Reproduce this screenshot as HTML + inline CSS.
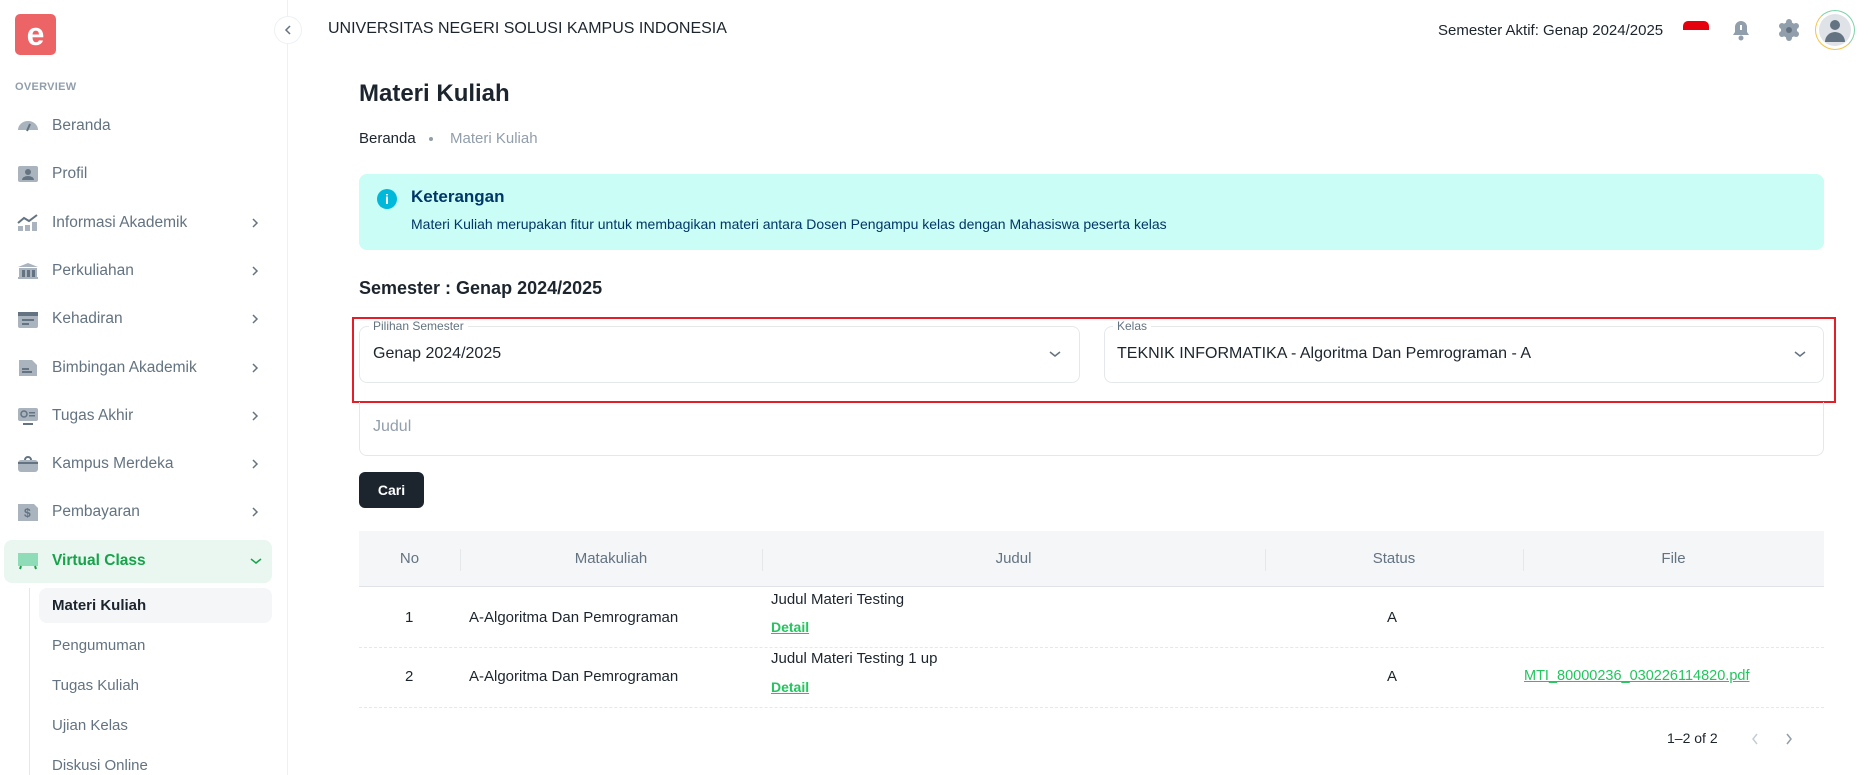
<!DOCTYPE html>
<html><head><meta charset="utf-8"><style>
*{box-sizing:border-box;margin:0;padding:0}
body{width:1870px;height:775px;overflow:hidden;background:#fff;font-family:"Liberation Sans",sans-serif;color:#1c252e;position:relative}
.abs{position:absolute}
.side{position:absolute;left:0;top:0;width:288px;height:775px;border-right:1px solid #eef0f2}
.mi{position:absolute;left:0;width:288px;height:40px;display:flex;align-items:center;font-size:15.5px;color:#637381}
.mi .ic{position:absolute;left:17px;width:22px;height:18px}
.mi .t{position:absolute;left:52px}
.mi .ch{position:absolute;left:250px;top:15px}
.sub{position:absolute;left:52px;font-size:15px;color:#637381}
.th{position:absolute;top:533px;height:55px;line-height:55px;font-size:15px;color:#637381;text-align:center}
.sep{position:absolute;top:549px;width:1px;height:22px;background:#e5e8eb}
.td{position:absolute;font-size:15px;color:#1c252e}
.dl{position:absolute;font-size:14px;font-weight:bold;color:#22c55e;text-decoration:underline}
</style></head><body>
<div class="side">
  <div class="abs" style="left:15px;top:14px;width:41px;height:41px;background:#ec6466;border-radius:5px;color:#fff;font-weight:bold;font-size:32px;line-height:40px;text-align:center">e</div>
  <div class="abs" style="left:15px;top:81px;font-size:11px;font-weight:bold;color:#919eab;letter-spacing:.3px">OVERVIEW</div>
  <div class="mi" style="top:106px"><svg class="ic" viewBox="0 0 22 18"><path d="M1 13a10 9 0 0 1 20 0z" fill="#aab4be"/><path d="M10 14l3-7" stroke="#637381" stroke-width="2"/></svg><span class="t">Beranda</span></div>
  <div class="mi" style="top:154px"><svg class="ic" viewBox="0 0 22 18"><rect x="1" y="1" width="20" height="16" rx="2" fill="#aab4be"/><circle cx="11" cy="7" r="3" fill="#637381"/><path d="M5 15a6 4 0 0 1 12 0z" fill="#637381"/></svg><span class="t">Profil</span></div>
  <div class="mi" style="top:203px"><svg class="ic" viewBox="0 0 22 18"><path d="M1 9l6-5 5 3 8-6" stroke="#637381" stroke-width="2" fill="none"/><rect x="1" y="12" width="5" height="5" fill="#aab4be"/><rect x="8" y="11" width="5" height="6" fill="#aab4be"/><rect x="15" y="8" width="5" height="9" fill="#aab4be"/></svg><span class="t">Informasi Akademik</span><svg class="ch" width="10" height="10" viewBox="0 0 10 10"><path d="M3 1l4 4-4 4" stroke="#637381" stroke-width="1.5" fill="none"/></svg></div>
  <div class="mi" style="top:251px"><svg class="ic" viewBox="0 0 22 18"><path d="M1 5l10-4 10 4z" fill="#aab4be"/><rect x="2" y="6" width="18" height="9" fill="#aab4be"/><rect x="5" y="8" width="3" height="7" fill="#637381"/><rect x="10" y="8" width="3" height="7" fill="#637381"/><rect x="15" y="8" width="3" height="7" fill="#637381"/><rect x="1" y="15" width="20" height="2" fill="#aab4be"/></svg><span class="t">Perkuliahan</span><svg class="ch" width="10" height="10" viewBox="0 0 10 10"><path d="M3 1l4 4-4 4" stroke="#637381" stroke-width="1.5" fill="none"/></svg></div>
  <div class="mi" style="top:299px"><svg class="ic" viewBox="0 0 22 18"><rect x="1" y="2" width="20" height="16" rx="2" fill="#aab4be"/><rect x="1" y="2" width="20" height="4" fill="#637381"/><rect x="5" y="9" width="12" height="2" fill="#637381"/><rect x="5" y="13" width="7" height="2" fill="#637381"/></svg><span class="t">Kehadiran</span><svg class="ch" width="10" height="10" viewBox="0 0 10 10"><path d="M3 1l4 4-4 4" stroke="#637381" stroke-width="1.5" fill="none"/></svg></div>
  <div class="mi" style="top:348px"><svg class="ic" viewBox="0 0 22 18"><path d="M2 1h13l5 5v11H2z" fill="#aab4be"/><rect x="5" y="9" width="7" height="2" fill="#637381"/><rect x="5" y="12" width="10" height="2" fill="#637381"/></svg><span class="t">Bimbingan Akademik</span><svg class="ch" width="10" height="10" viewBox="0 0 10 10"><path d="M3 1l4 4-4 4" stroke="#637381" stroke-width="1.5" fill="none"/></svg></div>
  <div class="mi" style="top:396px"><svg class="ic" viewBox="0 0 22 18"><rect x="1" y="1" width="20" height="13" rx="2" fill="#aab4be"/><circle cx="7" cy="7" r="3" fill="none" stroke="#637381" stroke-width="1.5"/><rect x="12" y="5" width="6" height="1.5" fill="#637381"/><rect x="12" y="8" width="6" height="1.5" fill="#637381"/><rect x="6" y="16" width="10" height="2" fill="#637381"/></svg><span class="t">Tugas Akhir</span><svg class="ch" width="10" height="10" viewBox="0 0 10 10"><path d="M3 1l4 4-4 4" stroke="#637381" stroke-width="1.5" fill="none"/></svg></div>
  <div class="mi" style="top:444px"><svg class="ic" viewBox="0 0 22 18"><rect x="1" y="5" width="20" height="12" rx="3" fill="#aab4be"/><path d="M1 8h20" stroke="#637381" stroke-width="2"/><path d="M8 5a3 3 0 0 1 6 0" stroke="#637381" stroke-width="2" fill="none"/></svg><span class="t">Kampus Merdeka</span><svg class="ch" width="10" height="10" viewBox="0 0 10 10"><path d="M3 1l4 4-4 4" stroke="#637381" stroke-width="1.5" fill="none"/></svg></div>
  <div class="mi" style="top:492px"><svg class="ic" viewBox="0 0 22 18"><path d="M1 1h16l4 4v13H1z" fill="#aab4be"/><text x="7" y="14" font-size="12" font-weight="bold" fill="#637381" font-family="Liberation Sans">$</text></svg><span class="t">Pembayaran</span><svg class="ch" width="10" height="10" viewBox="0 0 10 10"><path d="M3 1l4 4-4 4" stroke="#637381" stroke-width="1.5" fill="none"/></svg></div>
  <div class="abs" style="left:4px;top:540px;width:268px;height:43px;background:#eaf6f0;border-radius:8px"></div>
  <div class="mi" style="top:541px;color:#16a34a;font-weight:bold"><svg class="ic" viewBox="0 0 22 18"><rect x="1" y="1" width="20" height="13" fill="#8fdcb8"/><path d="M4 14l-1 3M18 14l1 3" stroke="#16a34a" stroke-width="2"/></svg><span class="t">Virtual Class</span><svg class="ch" width="12" height="10" viewBox="0 0 12 10"><path d="M1 3l5 4 5-4" stroke="#16a34a" stroke-width="1.5" fill="none"/></svg></div>
  <div class="abs" style="left:29px;top:588px;width:1px;height:187px;background:#e5e8eb"></div>
  <div class="abs" style="left:39px;top:588px;width:233px;height:35px;background:#f4f6f8;border-radius:8px"></div>
  <div class="sub" style="top:597px;color:#1c252e;font-weight:bold">Materi Kuliah</div>
  <div class="sub" style="top:637px">Pengumuman</div>
  <div class="sub" style="top:677px">Tugas Kuliah</div>
  <div class="sub" style="top:717px">Ujian Kelas</div>
  <div class="sub" style="top:757px">Diskusi Online</div>
</div>
<div class="abs" style="left:274px;top:16px;width:28px;height:28px;border:1px solid #eef0f2;border-radius:50%;background:#fff"><svg style="position:absolute;left:8px;top:8px" width="10" height="10" viewBox="0 0 10 10"><path d="M7 1L3 5l4 4" stroke="#637381" stroke-width="1.5" fill="none"/></svg></div>
<div class="abs" style="left:328px;top:20px;font-size:16px;font-weight:500;color:#1c252e">UNIVERSITAS NEGERI SOLUSI KAMPUS INDONESIA</div>
<div class="abs" style="left:1438px;top:22px;font-size:15px;color:#1c252e">Semester Aktif: Genap 2024/2025</div>
<div class="abs" style="left:1683px;top:21px;width:26px;height:9px;background:#e5000d;border-radius:5px 5px 0 0"></div>
<svg class="abs" style="left:1730px;top:19px" width="22" height="22" viewBox="0 0 22 22"><path d="M11 2a6 6 0 0 1 6 6v5l2 3H3l2-3V8a6 6 0 0 1 6-6z" fill="#919eab"/><circle cx="11" cy="19" r="2.5" fill="#919eab"/><rect x="10" y="6" width="2" height="5" fill="#fff"/></svg>
<svg class="abs" style="left:1778px;top:19px" width="22" height="22" viewBox="0 0 22 22"><circle cx="11" cy="11" r="8" fill="#919eab"/><g fill="#919eab"><circle cx="11" cy="3" r="3"/><circle cx="11" cy="19" r="3"/><circle cx="4" cy="7" r="3"/><circle cx="18" cy="7" r="3"/><circle cx="4" cy="15" r="3"/><circle cx="18" cy="15" r="3"/></g><circle cx="11" cy="11" r="3" fill="#637381"/></svg>
<div class="abs" style="left:1815px;top:10px;width:40px;height:40px;border-radius:50%;border:1.5px solid #7dd3a8;border-left-color:#f5c34d;border-bottom-color:#f5c34d;padding:3px"><div style="width:100%;height:100%;border-radius:50%;background:#dfe3e8;position:relative;overflow:hidden"><div class="abs" style="left:11px;top:6px;width:10px;height:10px;border-radius:50%;background:#637381"></div><div class="abs" style="left:6px;top:18px;width:20px;height:10px;border-radius:10px 10px 0 0;background:#637381"></div></div></div>

<div class="abs" style="left:359px;top:80px;font-size:24px;font-weight:bold">Materi Kuliah</div>
<div class="abs" style="left:359px;top:130px;font-size:15px">Beranda</div>
<div class="abs" style="left:429px;top:137px;width:4px;height:4px;border-radius:50%;background:#919eab"></div>
<div class="abs" style="left:450px;top:130px;font-size:15px;color:#919eab">Materi Kuliah</div>

<div class="abs" style="left:359px;top:174px;width:1465px;height:76px;background:#cafdf5;border-radius:8px"></div>
<div class="abs" style="left:377px;top:189px;width:20px;height:20px;border-radius:50%;background:#00b8d9;color:#fff;font-weight:bold;font-size:14px;text-align:center;line-height:20px">i</div>
<div class="abs" style="left:411px;top:187px;font-size:17px;font-weight:bold;color:#003768">Keterangan</div>
<div class="abs" style="left:411px;top:216px;font-size:14px;color:#003768">Materi Kuliah merupakan fitur untuk membagikan materi antara Dosen Pengampu kelas dengan Mahasiswa peserta kelas</div>

<div class="abs" style="left:359px;top:278px;font-size:18px;font-weight:bold">Semester : Genap 2024/2025</div>

<div class="abs" style="left:352px;top:317px;width:1484px;height:86px;border:2px solid #e41e26"></div>
<div class="abs" style="left:359px;top:326px;width:721px;height:57px;border:1px solid #e5e8eb;border-radius:8px"></div>
<div class="abs" style="left:369px;top:319px;padding:0 4px;background:#fff;font-size:12px;color:#637381">Pilihan Semester</div>
<div class="abs" style="left:373px;top:345px;font-size:16px">Genap 2024/2025</div>
<svg class="abs" style="left:1049px;top:349px" width="12" height="10" viewBox="0 0 12 10"><path d="M1 3l5 4 5-4" stroke="#637381" stroke-width="1.5" fill="none"/></svg>
<div class="abs" style="left:1104px;top:326px;width:720px;height:57px;border:1px solid #e5e8eb;border-radius:8px"></div>
<div class="abs" style="left:1113px;top:319px;padding:0 4px;background:#fff;font-size:12px;color:#637381">Kelas</div>
<div class="abs" style="left:1117px;top:345px;font-size:16px">TEKNIK INFORMATIKA - Algoritma Dan Pemrograman - A</div>
<svg class="abs" style="left:1794px;top:349px" width="12" height="10" viewBox="0 0 12 10"><path d="M1 3l5 4 5-4" stroke="#637381" stroke-width="1.5" fill="none"/></svg>

<div class="abs" style="left:359px;top:402px;width:1465px;height:54px;border:1px solid #e5e8eb;border-top:none;border-radius:0 0 8px 8px"></div>
<div class="abs" style="left:373px;top:418px;font-size:16px;color:#919eab">Judul</div>

<div class="abs" style="left:359px;top:472px;width:65px;height:36px;background:#1c252e;border-radius:6px;color:#fff;font-weight:bold;font-size:14px;text-align:center;line-height:36px">Cari</div>

<div class="abs" style="left:359px;top:531px;width:1465px;height:56px;background:#f4f6f8;border-bottom:1px solid #dfe3e8"></div>
<div class="th" style="left:359px;width:101px;top:531px">No</div>
<div class="th" style="left:460px;width:302px;top:531px">Matakuliah</div>
<div class="th" style="left:762px;width:503px;top:531px">Judul</div>
<div class="th" style="left:1265px;width:258px;top:531px">Status</div>
<div class="th" style="left:1523px;width:301px;top:531px">File</div>
<div class="sep" style="left:460px"></div><div class="sep" style="left:762px"></div><div class="sep" style="left:1265px"></div><div class="sep" style="left:1523px"></div>
<div class="abs" style="left:359px;top:647px;width:1465px;border-top:1px dashed #e5e8eb"></div>
<div class="abs" style="left:359px;top:707px;width:1465px;border-top:1px dashed #e5e8eb"></div>

<div class="td" style="left:405px;top:609px">1</div>
<div class="td" style="left:469px;top:609px">A-Algoritma Dan Pemrograman</div>
<div class="td" style="left:771px;top:591px">Judul Materi Testing</div>
<div class="dl" style="left:771px;top:619px">Detail</div>
<div class="td" style="left:1387px;top:609px">A</div>

<div class="td" style="left:405px;top:668px">2</div>
<div class="td" style="left:469px;top:668px">A-Algoritma Dan Pemrograman</div>
<div class="td" style="left:771px;top:650px">Judul Materi Testing 1 up</div>
<div class="dl" style="left:771px;top:679px">Detail</div>
<div class="td" style="left:1387px;top:668px">A</div>
<div class="td" style="left:1524px;top:668px;color:#22c55e;text-decoration:underline;font-size:14.5px">MTI_80000236_030226114820.pdf</div>

<div class="td" style="left:1667px;top:730px;font-size:14px">1–2 of 2</div>
<svg class="abs" style="left:1750px;top:733px" width="10" height="12" viewBox="0 0 10 12"><path d="M7 1L3 6l4 5" stroke="#c4cdd5" stroke-width="1.5" fill="none"/></svg>
<svg class="abs" style="left:1784px;top:733px" width="10" height="12" viewBox="0 0 10 12"><path d="M3 1l4 5-4 5" stroke="#919eab" stroke-width="1.5" fill="none"/></svg>
</body></html>
